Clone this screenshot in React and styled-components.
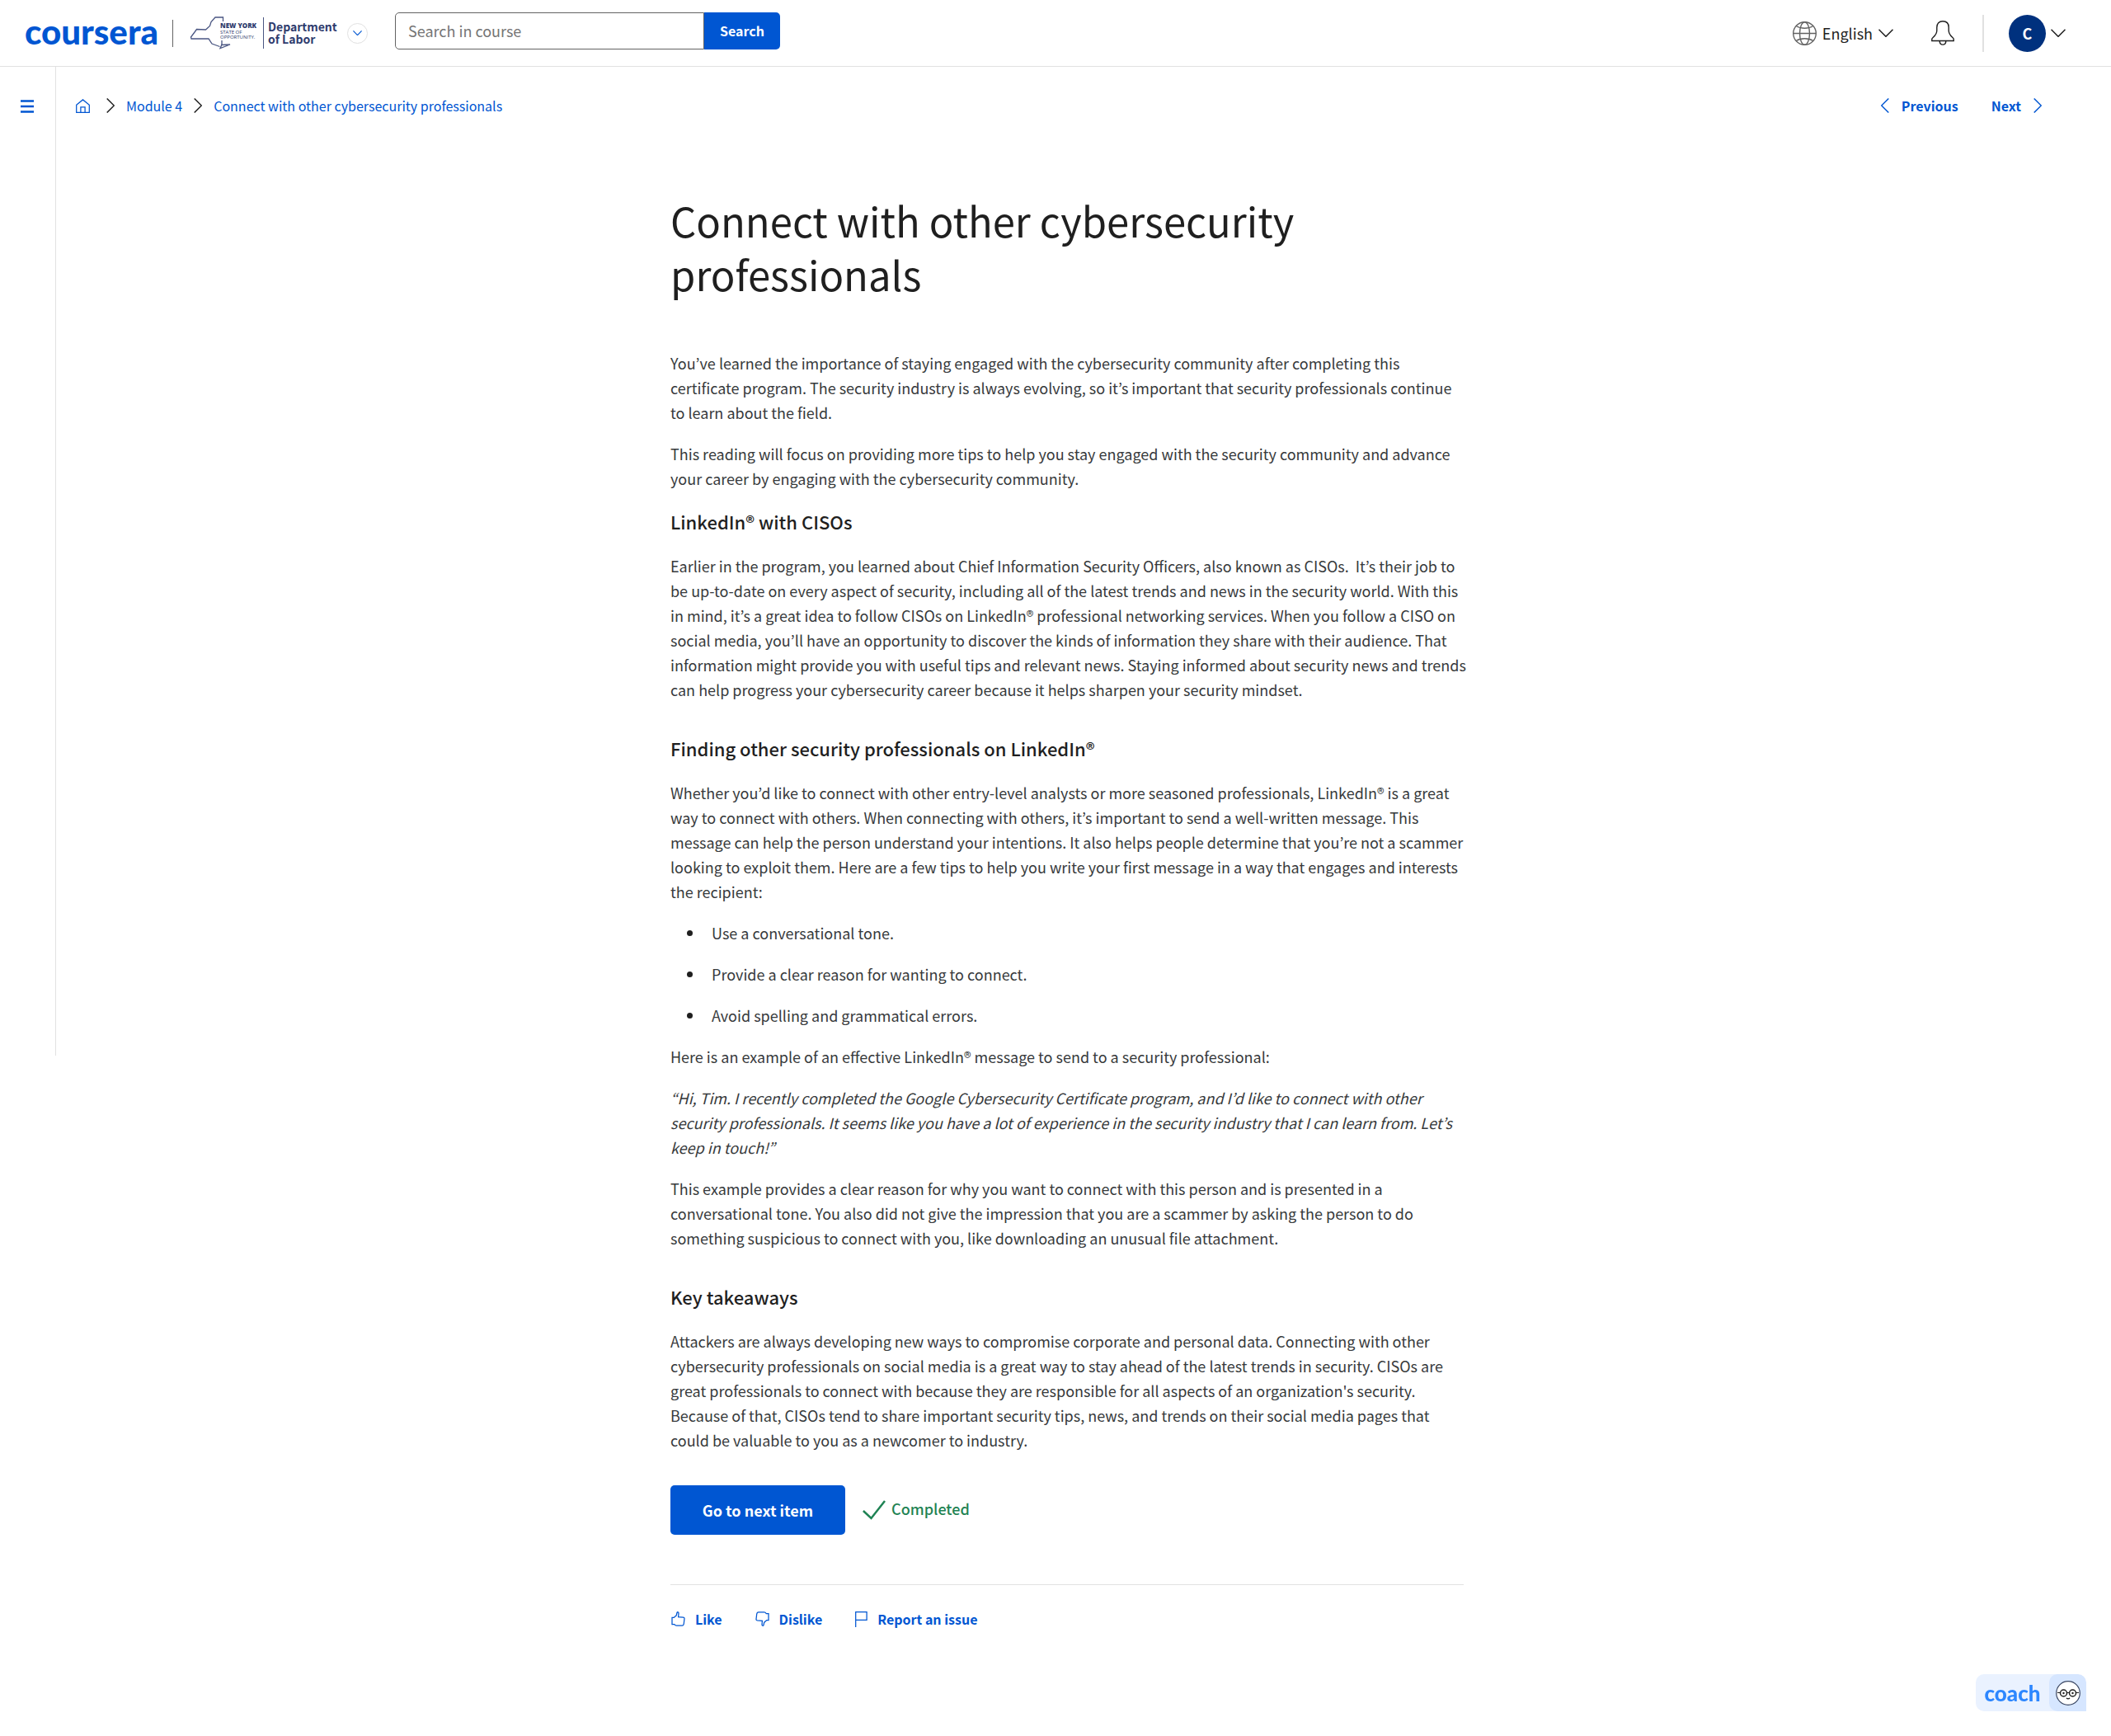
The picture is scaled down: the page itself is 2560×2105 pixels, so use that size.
import React from "react";
import styled, { createGlobalStyle } from "styled-components";

const blue = "#0056d2";
const ink = "#1f1f1f";
const line = "#e1e1e1";

const GlobalStyle = createGlobalStyle`
  *, *::before, *::after { box-sizing: border-box; }
  body {
    margin: 0;
    background: #fff;
    color: ${ink};
    font-family: "Noto Sans CJK KR", "Noto Sans", sans-serif;
    font-size: 18px;
    line-height: 30px;
  }
  button, input { font-family: inherit; }
  svg { display: block; flex: none; }
`;

const Header = styled.header`
  display: flex;
  align-items: center;
  height: 81px;
  padding: 0 55px 0 30px;
  border-bottom: 1px solid ${line};
`;

const Brand = styled.a`
  flex: none;
  width: 160px;
  margin: 0 19px 4px 0;
  color: ${blue};
  font-family: Lato, sans-serif;
  font-size: 42px;
  font-weight: 900;
  line-height: 64px;
  text-decoration: none;
`;

const Divider = styled.span`
  width: ${(p) => p.$width}px;
  height: ${(p) => p.$height}px;
  background: ${(p) => p.$color};
`;

const Partner = styled.a`
  display: flex;
  align-items: center;
  margin: 0 16px 0 20px;
  color: #2f3c6e;
  text-decoration: none;
`;

const StateMark = styled.span`
  display: grid;
  grid-template-columns: 37px auto;
  width: 89px;
`;

const StateShape = styled.svg`
  grid-area: 1 / 1 / 2 / 3;
`;

const StateName = styled.span`
  grid-area: 1 / 2 / 2 / 3;
  padding-top: 6px;
  font-family: "Open Sans", sans-serif;
  font-size: 6px;
  line-height: 6px;
  white-space: nowrap;
`;

const StateTitle = styled.strong`
  display: block;
  font-size: 8px;
  font-weight: 800;
  line-height: 10px;
`;

const Agency = styled.strong`
  margin-left: 5px;
  width: 80px;
  font-size: 14px;
  font-weight: 700;
  line-height: 15px;
  white-space: nowrap;
`;

const RoundButton = styled.button`
  display: grid;
  place-items: center;
  width: 25px;
  height: 25px;
  padding: 0;
  border: 1px solid ${line};
  border-radius: 50%;
  background: #fff;
  color: ${blue};
`;

const SearchForm = styled.form`
  display: flex;
  width: 467px;
  height: 45px;
  margin: 0 auto 6px 33px;
`;

const SearchInput = styled.input`
  flex: 1;
  min-width: 0;
  padding: 0 15px;
  border: 1px solid #636363;
  border-radius: 5px 0 0 5px;
  color: ${ink};
  font-size: 18px;
  &::placeholder { color: #757575; opacity: 1; }
`;

const SearchButton = styled.button`
  width: 92px;
  padding: 0;
  border: 0;
  border-radius: 0 5px 5px 0;
  background: ${blue};
  color: #fff;
  font-size: 16px;
  font-weight: 700;
`;

const PlainButton = styled.button`
  display: flex;
  align-items: center;
  gap: ${(p) => p.$gap || 0}px;
  padding: 0;
  border: 0;
  background: none;
  color: ${(p) => p.$color || ink};
  font-size: ${(p) => p.$size || 18}px;
  font-weight: ${(p) => p.$weight || 400};
  line-height: 30px;
`;

const HeaderTools = styled.div`
  display: flex;
  align-items: center;
  gap: 34px;
`;

const BellButton = styled(PlainButton)`
  margin-left: 12px;
`;

const Avatar = styled.span`
  width: 45px;
  height: 45px;
  border-radius: 50%;
  background: #00317e;
  color: #fff;
  font-size: 18px;
  font-weight: 700;
  line-height: 45px;
  text-align: center;
`;

const AccountButton = styled(PlainButton)`
  margin-left: -4px;
`;

const Layout = styled.div`
  display: flex;
  align-items: flex-start;
`;

const Rail = styled.aside`
  flex: none;
  display: flex;
  align-items: flex-start;
  width: 68px;
  height: 1199px;
  padding: 40px 0 0 25px;
  border-right: 1px solid ${line};
`;

const Page = styled.div`
  flex: 1;
  min-width: 0;
  padding: 32px 40px 0 0;
`;

const TopBar = styled.div`
  display: flex;
  justify-content: space-between;
  align-items: center;
  padding: 0 44px 0 24px;
`;

const Crumbs = styled.nav`
  display: flex;
  align-items: center;
  gap: 14px;
  color: ${ink};
  font-size: 16px;
`;

const CrumbArrow = styled.span`
  padding-left: ${(p) => p.$before || 0}px;
`;

const Crumb = styled.a`
  color: ${blue};
  text-decoration: none;
`;

const Pager = styled.nav`
  display: flex;
  gap: 40px;
`;

const TextLink = styled.a`
  display: flex;
  align-items: center;
  gap: 15px;
  color: ${blue};
  font-size: 16px;
  font-weight: 700;
  text-decoration: none;
`;

const Article = styled.main`
  width: 100%;
  max-width: 962px;
  margin: 0 auto;
  padding: 91px 0 120px;
`;

const Title = styled.h1`
  margin: 0 0 61px;
  font-size: 49px;
  font-weight: 400;
  line-height: 65px;
`;

const Heading = styled.h2`
  margin: ${(p) => p.$above}px 0 24px;
  font-size: 22px;
  font-weight: 500;
  line-height: 30px;
`;

const Text = styled.p`
  margin: 0 -5px 20px 0;
  color: #373a3c;
`;

const Quote = styled(Text)`
  font-style: italic;
`;

const Tips = styled.ul`
  margin: 0 0 20px;
  padding: 0;
  list-style: none;
`;

const Tip = styled.li`
  display: flex;
  align-items: center;
  gap: 23px;
  margin-bottom: 20px;
  padding-left: 20px;
  color: #373a3c;
  &::before {
    content: "";
    width: 7px;
    height: 7px;
    border-radius: 50%;
    background: ${ink};
  }
`;

const Actions = styled.div`
  display: flex;
  align-items: center;
  gap: 21px;
  padding: 20px 0 60px;
  border-bottom: 1px solid ${line};
`;

const NextButton = styled.button`
  width: 212px;
  height: 60px;
  border: 0;
  border-radius: 5px;
  background: ${blue};
  color: #fff;
  font-size: 18px;
  font-weight: 700;
`;

const Completed = styled.span`
  display: flex;
  align-items: center;
  gap: 7px;
  color: #1f8354;
  font-weight: 500;
`;

const CompletedLabel = styled.span`
  padding-bottom: 4px;
`;

const Feedback = styled.div`
  display: flex;
  gap: 40px;
  padding: 26px 0 0 1px;
`;

const Coach = styled.button`
  position: fixed;
  right: 30px;
  bottom: 30px;
  display: flex;
  align-items: center;
  width: 134px;
  height: 45px;
  padding: 0;
  border: 0;
  border-radius: 10px 10px 0 10px;
  background: #eaf2ff;
  color: #2d87ff;
  overflow: hidden;
`;

const CoachName = styled.span`
  flex: 1;
  font-family: Lato, sans-serif;
  font-size: 26px;
  font-weight: 900;
  line-height: 40px;
`;

const CoachFace = styled.span`
  display: grid;
  place-items: center;
  width: 45px;
  height: 45px;
  border-radius: 10px 10px 0 10px;
  background: #d6e6ff;
`;

function Chevron({ dir = "down", stroke = 1.5, size = 18 }) {
  const d = {
    down: "M0.5 0.7 9 9.3 17.5 0.7",
    right: "M0.7 0.5 9.3 9 0.7 17.5",
    left: "M9.3 0.5 0.7 9 9.3 17.5",
  }[dir];
  const flat = dir === "down";
  const short = Math.round((size * 10) / 18);
  return (
    <svg
      width={flat ? size : short}
      height={flat ? short : size}
      viewBox={flat ? "0 0 18 10" : "0 0 10 18"}
      fill="none"
      stroke="currentColor"
      strokeWidth={stroke}
      aria-hidden="true"
    >
      <path d={d} />
    </svg>
  );
}

function Icon({ w, h, children, stroke = 1.25 }) {
  return (
    <svg width={w} height={h} viewBox={`0 0 ${w} ${h}`} fill="none" stroke="currentColor" strokeWidth={stroke} aria-hidden="true">
      {children}
    </svg>
  );
}

const Globe = () => (
  <svg width="29" height="29" viewBox="0 0 29 29" fill="none" stroke="#636363" strokeWidth="1.4" aria-hidden="true">
    <circle cx="14.5" cy="14.5" r="13.8" />
    <ellipse cx="14.5" cy="14.5" rx="6" ry="13.8" />
    <path d="M0.7 14.5h27.6M4.2 5.5c5.5 3.6 15.1 3.6 20.6 0M4.2 23.5c5.5-3.6 15.1-3.6 20.6 0" />
  </svg>
);

const Bell = () => (
  <Icon w={28} h={30} stroke={1.4}>
    <path d="M0.8 24.5v-2.2c0-1.6 6-4 6-10.3V8.2C6.8 3.8 9.4 0.8 14 0.8s7.2 3 7.2 7.4V12c0 6.3 6 8.7 6 10.3v2.2z" />
    <path d="M10.2 24.5c0 6.2 7.6 6.2 7.6 0" />
  </Icon>
);

const Home = () => (
  <Icon w={17} h={17}>
    <path d="M0.7 7.2 8.5 0.9l7.8 6.3v9.1H0.7z" />
    <path d="M5.9 16.3V9.8h5.2v6.5" />
  </Icon>
);

const thumb =
  "M1 7.4h2.2L6.200 4.800 7 1.500c.400-1.200 2-.9 2 .500L8.600 6.700l6 .5c.9.100 1.500.7 1.400 1.500l-.7 6c-.200 1.500-.9 2.400-2.100 2.400H6.400c-1.200 0-2-.6-2.600-1.600H1z";

const Like = () => (
  <Icon w={17} h={18}>
    <path d={thumb} />
  </Icon>
);

const Dislike = () => (
  <Icon w={17} h={18}>
    <path d={thumb} transform="rotate(180 8.5 9)" />
  </Icon>
);

const Flag = () => (
  <Icon w={15} h={19}>
    <path d="M0.7 19V0.7h13.4v9.6H0.7" />
  </Icon>
);

export default function App() {
  return (
    <>
      <GlobalStyle />
      <Header>
        <Brand href="#home">coursera</Brand>
        <Divider $width={1} $height={33} $color="#636363" />
        <Partner href="#partner">
          <StateMark>
            <StateShape width="84" height="40" viewBox="0 0 84 40" fill="none" stroke="#4a5682" strokeWidth="1.3" aria-hidden="true">
              <path d="M40.5 6V1h-9.5l-5 5.5-1.5 5-5 4.5-11-.5-2.5 3.5-4.5 6 .5 2h21l4 6 9.5 3.5" />
              <path d="M39 29v5l-2 4.5 12-4.5-11 .5" />
            </StateShape>
            <StateName>
              <StateTitle>NEW YORK</StateTitle>
              STATE OF
              <br />
              OPPORTUNITY.
            </StateName>
          </StateMark>
          <Divider $width={1} $height={38} $color="#4a5682" />
          <Agency>
            Department
            <br />
            of Labor
          </Agency>
        </Partner>
        <RoundButton type="button" aria-label="Switch program">
          <Chevron size={11} stroke={2} />
        </RoundButton>
        <SearchForm role="search">
          <SearchInput type="text" placeholder="Search in course" aria-label="Search in course" />
          <SearchButton type="button">Search</SearchButton>
        </SearchForm>
        <HeaderTools>
          <PlainButton type="button" $gap={7}>
            <Globe />
            English
            <Chevron />
          </PlainButton>
          <BellButton type="button" aria-label="Notifications">
            <Bell />
          </BellButton>
          <Divider $width={2} $height={45} $color={line} />
          <AccountButton type="button" $gap={6} aria-label="Account menu">
            <Avatar>C</Avatar>
            <Chevron />
          </AccountButton>
        </HeaderTools>
      </Header>
      <Layout>
        <Rail>
          <PlainButton type="button" $color={blue} aria-label="Open course menu">
            <Icon w={16} h={16} stroke={2.5}>
              <path d="M0 1.5h16M0 8h16M0 14.5h16" />
            </Icon>
          </PlainButton>
        </Rail>
        <Page>
          <TopBar>
            <Crumbs aria-label="Breadcrumb">
              <Crumb href="#course" aria-label="Course home">
                <Home />
              </Crumb>
              <CrumbArrow $before={6}>
                <Chevron dir="right" />
              </CrumbArrow>
              <Crumb href="#module">Module 4</Crumb>
              <CrumbArrow>
                <Chevron dir="right" />
              </CrumbArrow>
              <Crumb href="#item">Connect with other cybersecurity professionals</Crumb>
            </Crumbs>
            <Pager aria-label="Course items">
              <TextLink href="#previous">
                <Chevron dir="left" />
                Previous
              </TextLink>
              <TextLink href="#next">
                Next
                <Chevron dir="right" />
              </TextLink>
            </Pager>
          </TopBar>
          <Article>
            <Title>Connect with other cybersecurity professionals</Title>
            <Text>
              You’ve learned the importance of staying engaged with the cybersecurity community after completing this
              certificate program. The security industry is always evolving, so it’s important that security
              professionals continue to learn about the field.
            </Text>
            <Text>
              This reading will focus on providing more tips to help you stay engaged with the security community and
              advance your career by engaging with the cybersecurity community.
            </Text>
            <Heading $above={22}>LinkedIn® with CISOs</Heading>
            <Text>
              Earlier in the program, you learned about Chief Information Security Officers, also known as
              CISOs.&nbsp; It’s their job to be up-to-date on every aspect of security, including all of the latest
              trends and news in the security world. With this in mind, it’s a great idea to follow CISOs on LinkedIn®
              professional networking services. When you follow a CISO on social media, you’ll have an opportunity to
              discover the kinds of information they share with their audience. That information might provide you with
              useful tips and relevant news. Staying informed about security news and trends can help progress your
              cybersecurity career because it helps sharpen your security mindset.
            </Text>
            <Heading $above={41}>Finding other security professionals on LinkedIn®</Heading>
            <Text>
              Whether you’d like to connect with other entry-level analysts or more seasoned professionals, LinkedIn® is
              a great way to connect with others. When connecting with others, it’s important to send a well-written
              message. This message can help the person understand your intentions. It also helps people determine that
              you’re not a scammer looking to exploit them. Here are a few tips to help you write your first message in
              a way that engages and interests the recipient:
            </Text>
            <Tips>
              <Tip>Use a conversational tone.</Tip>
              <Tip>Provide a clear reason for wanting to connect.</Tip>
              <Tip>Avoid spelling and grammatical errors.</Tip>
            </Tips>
            <Text>Here is an example of an effective LinkedIn® message to send to a security professional:</Text>
            <Quote>
              “Hi, Tim. I recently completed the Google Cybersecurity Certificate program, and I’d like to connect with
              other security professionals. It seems like you have a lot of experience in the security industry that I
              can learn from. Let’s keep in touch!”
            </Quote>
            <Text>
              This example provides a clear reason for why you want to connect with this person and is presented in a
              conversational tone. You also did not give the impression that you are a scammer by asking the person to
              do something suspicious to connect with you, like downloading an unusual file attachment.
            </Text>
            <Heading $above={41}>Key takeaways</Heading>
            <Text>
              Attackers are always developing new ways to compromise corporate and personal data. Connecting with other
              cybersecurity professionals on social media is a great way to stay ahead of the latest trends in security.
              CISOs are great professionals to connect with because they are responsible for all aspects of an
              organization's security. Because of that, CISOs tend to share important security tips, news, and trends on
              their social media pages that could be valuable to you as a newcomer to industry.
            </Text>
            <Actions>
              <NextButton type="button">Go to next item</NextButton>
              <Completed>
                <Icon w={28} h={24} stroke={2.5}>
                  <path d="M0.9 13 10.5 22 27 1" />
                </Icon>
                <CompletedLabel>Completed</CompletedLabel>
              </Completed>
            </Actions>
            <Feedback>
              <PlainButton type="button" $color={blue} $size={16} $weight={700} $gap={12}>
                <Like />
                Like
              </PlainButton>
              <PlainButton type="button" $color={blue} $size={16} $weight={700} $gap={12}>
                <Dislike />
                Dislike
              </PlainButton>
              <PlainButton type="button" $color={blue} $size={16} $weight={700} $gap={12}>
                <Flag />
                Report an issue
              </PlainButton>
            </Feedback>
          </Article>
        </Page>
      </Layout>
      <Coach type="button">
        <CoachName>coach</CoachName>
        <CoachFace>
          <svg width="30" height="30" viewBox="0 0 30 30" fill="none" stroke="#1f1f1f" aria-hidden="true">
            <circle cx="15" cy="15" r="14.3" fill="#fff" stroke="#3b4763" strokeWidth="1.2" />
            <circle cx="9.5" cy="15" r="4" strokeWidth="1.5" />
            <circle cx="20.5" cy="15" r="4" strokeWidth="1.5" />
            <path d="M2 14.5h3.5M24.5 14.5H28M13.5 14.5h3M13 21c1 1.2 3 1.2 4 0" strokeWidth="1.2" />
            <circle cx="9.5" cy="15" r="1.2" fill="#1f1f1f" stroke="none" />
            <circle cx="20.5" cy="15" r="1.2" fill="#1f1f1f" stroke="none" />
          </svg>
        </CoachFace>
      </Coach>
    </>
  );
}
